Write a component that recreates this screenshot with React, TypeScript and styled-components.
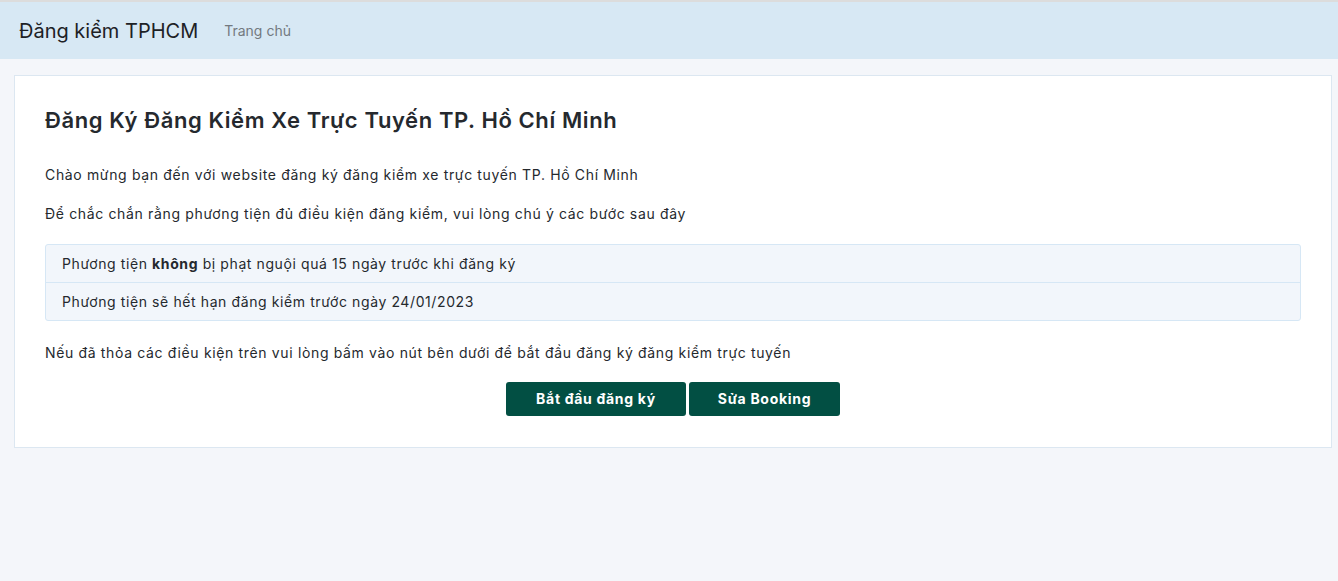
import React from 'react';
import styled, { createGlobalStyle } from 'styled-components';

const GlobalStyle = createGlobalStyle`
  html, body {
    margin: 0;
    padding: 0;
    background: #f4f6fa;
    font-family: Inter, "Noto Sans", "Liberation Sans", sans-serif;
    color: #212529;
  }
  * { box-sizing: border-box; }
`;

const Navbar = styled.nav`
  display: flex;
  align-items: center;
  height: 59px;
  padding: 0 19px;
  background: #d7e8f4;
  border-top: 2px solid #dcdcdc;
`;

const Brand = styled.a`
  font-size: 20px;
  color: #1d2125;
  margin-right: 26px;
  text-decoration: none;
`;

const NavLink = styled.a`
  font-size: 14px;
  color: #73797f;
  text-decoration: none;
`;

const Main = styled.main`
  padding: 16px 6px 0 14px;
`;

const Card = styled.section`
  background: #fff;
  border: 1px solid #dce7f1;
  padding: 30px 30px 31px;
`;

const Title = styled.h1`
  margin: 0 0 30px;
  font-size: 22px;
  line-height: 28px;
  font-weight: 600;
  letter-spacing: 0.6px;
  color: #25292e;
`;

const Text = styled.p<{ $last?: boolean }>`
  margin: 0 0 ${p => (p.$last ? 0 : 18)}px;
  font-size: 14px;
  line-height: 21px;
  letter-spacing: 0.65px;
  color: #25292e;
`;

const List = styled.ul`
  list-style: none;
  margin: 20px 0 21px;
  padding: 0;
  background: #f2f6fb;
  border: 1px solid #d6e7f5;
  border-radius: 3px;
`;

const Item = styled.li`
  padding: 8px 16px;
  font-size: 14px;
  line-height: 21px;
  letter-spacing: 0.6px;
  color: #25292e;
  & + & {
    border-top: 1px solid #d6e7f5;
  }
  b { font-weight: 700; }
`;

const Actions = styled.div`
  display: flex;
  justify-content: center;
  gap: 3px;
  margin-top: 19px;
`;

const Button = styled.button<{ $w: number }>`
  width: ${p => p.$w}px;
  height: 34px;
  border: none;
  border-radius: 3px;
  background: #024f43;
  color: #fff;
  font-family: inherit;
  font-size: 14px;
  line-height: 20px;
  font-weight: 700;
  letter-spacing: 0.7px;
  cursor: pointer;
`;

export default function App() {
  return (
    <>
      <GlobalStyle />
      <Navbar>
        <Brand href="#">Đăng kiểm TPHCM</Brand>
        <NavLink href="#">Trang chủ</NavLink>
      </Navbar>
      <Main>
        <Card>
          <Title>Đăng Ký Đăng Kiểm Xe Trực Tuyến TP. Hồ Chí Minh</Title>
          <Text>Chào mừng bạn đến với website đăng ký đăng kiểm xe trực tuyến TP. Hồ Chí Minh</Text>
          <Text>Để chắc chắn rằng phương tiện đủ điều kiện đăng kiểm, vui lòng chú ý các bước sau đây</Text>
          <List>
            <Item>Phương tiện <b>không</b> bị phạt nguội quá 15 ngày trước khi đăng ký</Item>
            <Item>Phương tiện sẽ hết hạn đăng kiểm trước ngày 24/01/2023</Item>
          </List>
          <Text $last>Nếu đã thỏa các điều kiện trên vui lòng bấm vào nút bên dưới để bắt đầu đăng ký đăng kiểm trực tuyến</Text>
          <Actions>
            <Button $w={180}>Bắt đầu đăng ký</Button>
            <Button $w={151}>Sửa Booking</Button>
          </Actions>
        </Card>
      </Main>
    </>
  );
}
